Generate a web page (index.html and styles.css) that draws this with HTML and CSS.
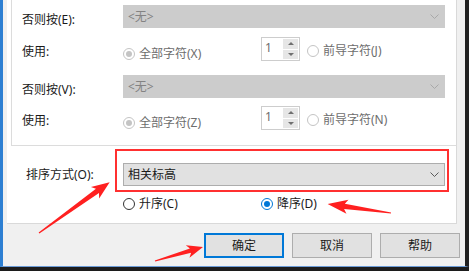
FILE: index.html
```html
<!DOCTYPE html>
<html lang="zh-CN">
<head>
    <meta charset="UTF-8">
    <title>排序选项</title>
    <link rel="stylesheet" href="styles.css">
</head>
<body>
    <div class="window">
        <div class="panel">
            <div class="group">
                <div class="row row-first">
                    <span class="label">否则按(E):</span>
                    <div class="combo disabled">
                        <span>&lt;无&gt;</span>
                        <svg class="chevron" width="9" height="5" viewBox="0 0 9 5"><polyline points="0.5,0.5 4.5,4.5 8.5,0.5"/></svg>
                    </div>
                </div>
                <div class="row row-use">
                    <span class="label">使用:</span>
                    <label class="radio disabled checked first"><span class="dot"></span>全部字符(X)</label>
                    <div class="spin">
                        <span class="spin-value">1</span>
                        <div class="spin-btns"><span class="spin-up"></span><span class="spin-down"></span></div>
                    </div>
                    <label class="radio disabled second"><span class="dot"></span>前导字符(J)</label>
                </div>
                <div class="row row-third">
                    <span class="label">否则按(V):</span>
                    <div class="combo disabled">
                        <span>&lt;无&gt;</span>
                        <svg class="chevron" width="9" height="5" viewBox="0 0 9 5"><polyline points="0.5,0.5 4.5,4.5 8.5,0.5"/></svg>
                    </div>
                </div>
                <div class="row row-use row-last">
                    <span class="label">使用:</span>
                    <label class="radio disabled checked first"><span class="dot"></span>全部字符(Z)</label>
                    <div class="spin">
                        <span class="spin-value">1</span>
                        <div class="spin-btns"><span class="spin-up"></span><span class="spin-down"></span></div>
                    </div>
                    <label class="radio disabled second"><span class="dot"></span>前导字符(N)</label>
                </div>
            </div>

            <div class="sort">
                <div class="sort-row">
                    <span class="sort-label">排序方式(O):</span>
                    <div class="combo">
                        <span>相关标高</span>
                        <svg class="chevron" width="9" height="5" viewBox="0 0 9 5"><polyline points="0.5,0.5 4.5,4.5 8.5,0.5"/></svg>
                    </div>
                </div>
                <div class="sort-options">
                    <label class="radio first"><span class="dot"></span>升序(C)</label>
                    <label class="radio checked"><span class="dot"></span>降序(D)</label>
                </div>
            </div>
        </div>

        <div class="buttons">
            <button class="button default">确定</button>
            <button class="button">取消</button>
            <button class="button">帮助</button>
        </div>
    </div>

    <!-- Markierungen -->
    <div class="highlight"></div>
    <svg class="arrows" width="469" height="271" viewBox="0 0 469 271">
        <polygon transform="translate(39 233) rotate(-35.7)" points="0,-0.6 72,-2.6 69,-7 87,0 69,7 72,2.6 0,0.6"/>
        <polygon transform="translate(155 261) rotate(-16.3)" points="0,-0.6 37,-2.2 34,-6.5 50,0 34,6.5 37,2.2 0,0.6"/>
        <polygon transform="translate(391 213) rotate(188.1)" points="0,-0.6 47,-2.6 44,-7 64,0 44,7 47,2.6 0,0.6"/>
    </svg>
</body>
</html>
```

FILE: styles.css
```css
body {
    margin: 0;
    width: 469px;
    height: 271px;
    overflow: hidden;
    position: relative;
    background-color: #1c1c1c;
    font-family: "Noto Sans", "Noto Sans CJK SC", sans-serif;
    font-size: 12px;
    color: #1a1a1a;
}

.window {
    box-sizing: border-box;
    width: 469px;
    height: 267px;
    padding-left: 4px;
    background-color: #f0f0f0;
    border-left: 3px solid #2d7fd2;
    border-right: 4px solid #202020;
    border-bottom: 1px solid #6b9bd6;
}

.panel {
    box-sizing: border-box;
    width: 450px;
    height: 224px;
    background-color: white;
    border-right: 1px solid #d9d9d9;
    border-bottom: 1px solid #d9d9d9;
}

.group {
    box-sizing: border-box;
    width: 445px;
    height: 146px;
    margin-left: 4px;
    padding: 5px 11px 0 10px;
    border-left: 1px solid #dcdcdc;
    border-bottom: 1px solid #dcdcdc;
}

.row {
    display: flex;
    align-items: flex-start;
}

.row-use {
    margin-top: 9px;
}

.row-third {
    margin-top: 13px;
}

.row-last {
    margin-top: 8px;
}

.label {
    flex: none;
    width: 101px;
    margin-top: 7px;
    line-height: 16px;
}

.combo {
    flex: 1;
    box-sizing: border-box;
    height: 23px;
    display: flex;
    align-items: center;
    justify-content: space-between;
    padding: 0 5px 1px 4px;
    background-color: #e1e1e1;
    border: 1px solid #adadad;
}

.combo.disabled {
    background-color: #cccccc;
    border-color: #cccccc;
    color: #838383;
}

.chevron {
    fill: none;
    stroke: #5a5a5a;
    stroke-width: 1;
}

.combo.disabled .chevron {
    stroke: #a8a8a8;
}

.radio {
    display: flex;
    align-items: center;
    gap: 4px;
    line-height: 16px;
}

.radio .dot {
    box-sizing: border-box;
    width: 12px;
    height: 12px;
    border: 1px solid #333;
    border-radius: 50%;
    display: flex;
    align-items: center;
    justify-content: center;
}

.radio.checked .dot {
    border-color: #0078d7;
}

.radio.checked .dot::after {
    content: '';
    width: 6px;
    height: 6px;
    border-radius: 50%;
    background-color: #0078d7;
}

.radio.disabled {
    color: #6d6d6d;
}

.radio.disabled .dot {
    border-color: #c4c4c4;
}

.radio.disabled.checked .dot::after {
    background-color: #c4c4c4;
}

.row-use .radio.first {
    width: 138px;
    margin-top: 9px;
}

.row-use .radio.second {
    margin-left: 7px;
    margin-top: 6px;
}

.spin {
    flex: none;
    box-sizing: border-box;
    width: 39px;
    height: 24px;
    display: flex;
    background-color: white;
    border: 1px solid #cdcdcd;
}

.spin-value {
    flex: 1;
    padding-left: 3px;
    line-height: 19px;
    color: #6d6d6d;
}

.spin-btns {
    width: 15px;
    display: flex;
    flex-direction: column;
    gap: 1px;
    margin: 1px 1px 1px 0;
}

.spin-btns span {
    flex: 1;
    display: flex;
    align-items: center;
    justify-content: center;
    background-color: #e6e6e6;
}

.spin-up::before {
    content: '';
    border-left: 3px solid transparent;
    border-right: 3px solid transparent;
    border-bottom: 3px solid #707070;
}

.spin-down::before {
    content: '';
    border-left: 3px solid transparent;
    border-right: 3px solid transparent;
    border-top: 3px solid #707070;
}

.sort {
    padding: 17px 11px 0 19px;
}

.sort-row {
    display: flex;
    align-items: center;
}

.sort-label {
    width: 97px;
    line-height: 16px;
}

.sort-options {
    display: flex;
    margin-top: 10px;
    padding-left: 97px;
}

.sort-options .radio.first {
    width: 138px;
}

.buttons {
    display: flex;
    justify-content: flex-end;
    gap: 8px;
    padding: 9px 5px 0 0;
}

.button {
    box-sizing: border-box;
    width: 80px;
    height: 25px;
    padding: 0 0 1px;
    background-color: #e1e1e1;
    border: 1px solid #adadad;
    font-family: "Noto Sans", "Noto Sans CJK SC", sans-serif;
    font-size: 12px;
    color: #1a1a1a;
}

.button.default {
    border: 2px solid #0078d7;
}

.highlight {
    position: absolute;
    left: 115px;
    top: 149px;
    box-sizing: border-box;
    width: 334px;
    height: 43px;
    border: 2px solid #ff3030;
}

.arrows {
    position: absolute;
    left: 0;
    top: 0;
    pointer-events: none;
    fill: #ff2020;
}
```
